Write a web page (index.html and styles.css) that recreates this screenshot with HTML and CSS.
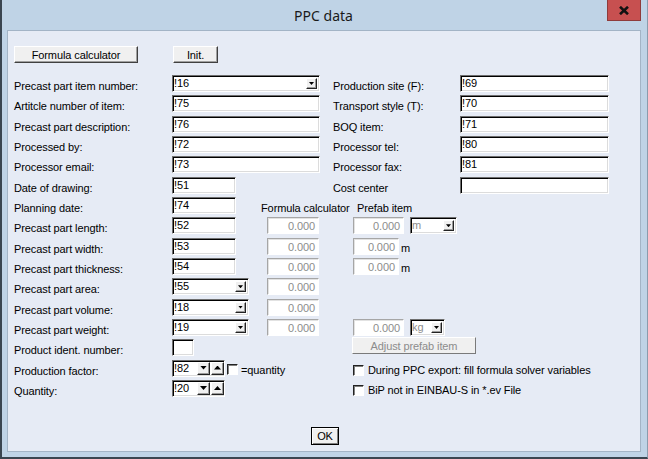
FILE: index.html
```html
<!DOCTYPE html>
<html lang="en">
<head>
  <meta charset="UTF-8">
  <title>PPC data</title>
  <link rel="stylesheet" href="styles.css">
</head>
<body>
  <div class="window">
    <div class="titlebar">
      <span></span>
      <span class="title">PPC data</span>
      <button class="close" title="Close">
        <svg width="10" height="9" viewBox="0 0 10 9"><path d="M1 0.8 L9 8.2 M9 0.8 L1 8.2" stroke="#111" stroke-width="2.6"/></svg>
      </button>
    </div>

    <div class="client">
      <div class="toolbar">
        <button class="btn btn-formula">Formula calculator</button>
        <button class="btn btn-init">Init.</button>
      </div>

      <div class="form">
        <div class="row">
          <span class="lbl">Precast part item number:</span>
          <div class="field combo w-wide c-main"><span class="val">!16</span><span class="drop"></span></div>
          <span class="lbl c-rlbl">Production site (F):</span>
          <div class="field w-right c-rin">!69</div>
        </div>
        <div class="row">
          <span class="lbl">Artitcle number of item:</span>
          <div class="field w-wide c-main">!75</div>
          <span class="lbl c-rlbl">Transport style (T):</span>
          <div class="field w-right c-rin">!70</div>
        </div>
        <div class="row">
          <span class="lbl">Precast part description:</span>
          <div class="field w-wide c-main">!76</div>
          <span class="lbl c-rlbl">BOQ item:</span>
          <div class="field w-right c-rin">!71</div>
        </div>
        <div class="row">
          <span class="lbl">Processed by:</span>
          <div class="field w-wide c-main">!72</div>
          <span class="lbl c-rlbl">Processor tel:</span>
          <div class="field w-right c-rin">!80</div>
        </div>
        <div class="row">
          <span class="lbl">Processor email:</span>
          <div class="field w-wide c-main">!73</div>
          <span class="lbl c-rlbl">Processor fax:</span>
          <div class="field w-right c-rin">!81</div>
        </div>
        <div class="row">
          <span class="lbl">Date of drawing:</span>
          <div class="field w-short c-main">!51</div>
          <span class="lbl c-rlbl">Cost center</span>
          <div class="field w-right c-rin"></div>
        </div>
        <div class="row">
          <span class="lbl">Planning date:</span>
          <div class="field w-short c-short">!74</div>
          <span class="lbl c-calc head-calc">Formula calculator</span>
          <span class="lbl c-prefab head-prefab">Prefab item</span>
        </div>
        <div class="row">
          <span class="lbl">Precast part length:</span>
          <div class="field w-short c-short">!52</div>
          <div class="field off w-calc c-calc">0.000</div>
          <div class="field off w-prefab c-prefab">0.000</div>
          <div class="field combo off w-unit c-unit"><span class="val">m</span><span class="drop"></span></div>
        </div>
        <div class="row">
          <span class="lbl">Precast part width:</span>
          <div class="field w-short c-short">!53</div>
          <div class="field off w-calc c-calc">0.000</div>
          <div class="c-prefab unit-cell"><div class="field off w-prefab">0.000</div><span class="unit">m</span></div>
        </div>
        <div class="row">
          <span class="lbl">Precast part thickness:</span>
          <div class="field w-short c-short">!54</div>
          <div class="field off w-calc c-calc">0.000</div>
          <div class="c-prefab unit-cell"><div class="field off w-prefab">0.000</div><span class="unit">m</span></div>
        </div>
        <div class="row">
          <span class="lbl">Precast part area:</span>
          <div class="field combo w-combo c-short"><span class="val">!55</span><span class="drop"></span></div>
          <div class="field off w-calc c-calc">0.000</div>
        </div>
        <div class="row">
          <span class="lbl">Precast part volume:</span>
          <div class="field combo w-combo c-short"><span class="val">!18</span><span class="drop"></span></div>
          <div class="field off w-calc c-calc">0.000</div>
        </div>
        <div class="row">
          <span class="lbl">Precast part weight:</span>
          <div class="field combo w-combo c-short"><span class="val">!19</span><span class="drop"></span></div>
          <div class="field off w-calc c-calc">0.000</div>
          <div class="field off w-prefab c-prefab">0.000</div>
          <div class="field combo off w-kg c-unit"><span class="val">kg</span><span class="drop"></span></div>
        </div>
        <div class="row">
          <span class="lbl">Product ident. number:</span>
          <div class="field w-tiny c-short"></div>
          <button class="btn btn-adjust c-opt" disabled>Adjust prefab item</button>
        </div>
        <div class="row">
          <span class="lbl">Production factor:</span>
          <div class="c-main spin-cell">
            <div class="field spin"><span class="val">!82</span><span class="arrow dn"></span><span class="arrow up"></span></div>
            <span class="check"></span><span>=quantity</span>
          </div>
          <div class="c-opt check-cell"><span class="check"></span><span>During PPC export: fill formula solver variables</span></div>
        </div>
        <div class="row">
          <span class="lbl">Quantity:</span>
          <div class="c-main spin-cell">
            <div class="field spin"><span class="val">!20</span><span class="arrow dn"></span><span class="arrow up"></span></div>
          </div>
          <div class="c-opt check-cell"><span class="check"></span><span>BiP not in EINBAU-S in *.ev File</span></div>
        </div>
      </div>

      <div class="actions">
        <button class="btn btn-ok">OK</button>
      </div>
    </div>
  </div>
</body>
</html>
```

FILE: styles.css
```css
:root {
  --frame: #bfd3e6;
  --client: #e6ebf5;
  --face: #f0f0f0;
  --dark: #6e6e6e;
  --text: #000;
  --muted: #8c8c8c;
}

body {
  margin: 0;
  font-family: "Liberation Sans", Arial, sans-serif;
  font-size: 11px;
  letter-spacing: -0.1px;
  color: var(--text);
}

.window {
  width: 648px;
  height: 459px;
  box-sizing: border-box;
  background: var(--frame);
  border-left: 2px solid #3a4550;
  border-right: 1px solid #8a9cad;
  border-bottom: 2px solid #3a4550;
  padding: 0 6px 5px 5px;
  display: flex;
  flex-direction: column;
}

/* title bar */
.titlebar {
  height: 30px;
  margin: 0 -6px 0 -7px;
  display: grid;
  grid-template-columns: 1fr auto 1fr;
  align-items: start;
}

.title {
  font-family: "Noto Sans", sans-serif;
  font-size: 14px;
  letter-spacing: 0;
  color: #1a1a1a;
  margin-top: 6px;
}

.close {
  justify-self: end;
  margin-right: 6px;
  width: 34px;
  height: 21px;
  padding: 0;
  background: #c75050;
  border: 1px solid #8f3b3b;
  border-top: none;
  display: flex;
  align-items: center;
  justify-content: center;
}

/* client area */
.client {
  flex: 1;
  background: var(--client);
  border: 1px solid #a3b4c6;
  padding: 15px 0 0 6px;
  display: flex;
  flex-direction: column;
}

.toolbar {
  display: flex;
  gap: 35px;
}

.btn {
  font-family: inherit;
  font-size: 11px;
  letter-spacing: -0.1px;
  color: var(--text);
  background: var(--face);
  border: 1px solid;
  border-color: #fff #404040 #404040 #fff;
  box-shadow: inset -1px -1px 0 #a0a0a0;
  padding: 0;
  height: 17px;
  line-height: 14px;
}

.btn-formula { width: 124px; }
.btn-init { width: 45px; }

.btn-adjust {
  width: 124px;
  margin-left: -1px;
  color: var(--muted);
  border-color: #fff #7a7a7a #7a7a7a #fff;
  box-shadow: none;
}

.actions {
  display: flex;
  justify-content: center;
  margin-top: 29px;
  padding-right: 4px;
}

.btn-ok {
  width: 28px;
  height: 18px;
  border: 1px solid #000;
  box-shadow: inset 1px 1px 0 #fff, inset -1px -1px 0 #808080;
}

/* form grid */
.form {
  margin-top: 10px;
}

.row {
  display: grid;
  grid-template-columns: 158px 95px 66px 20px 57px 50px 149px;
  height: 20.33px;
  align-items: start;
}

.lbl {
  grid-column: 1;
  margin-top: 7px;
  line-height: 13px;
  white-space: nowrap;
}

.c-main { grid-column: 2 / 4; }
.c-short { grid-column: 2; }
.c-calc { grid-column: 3; }
.c-rlbl { grid-column: 4 / 7; }
.c-rin { grid-column: 7; }
.c-prefab { grid-column: 5; }
.c-unit { grid-column: 6; }
.c-opt { grid-column: 5 / 8; }

.head-calc { margin-left: -6px; }
.head-prefab { margin-left: 4px; }

.field {
  margin-top: 2px;
  height: 17px;
  box-sizing: border-box;
  background: #fff;
  border: 1px solid;
  border-color: var(--dark) #fff #fff var(--dark);
  box-shadow: inset 1px 1px 0 #000, inset -1px -1px 0 #dcdcdc;
  padding: 1px 0 0 1px;
  line-height: 12px;
  display: flex;
  align-items: flex-start;
  overflow: hidden;
}

.field.off {
  border-color: #a6a6a6 #fff #fff #a6a6a6;
  box-shadow: inset 1px 1px 0 #e2e2e2;
  color: var(--muted);
  justify-content: flex-end;
  padding: 2px 3px 0 0;
}

.w-wide { width: 148px; }
.w-short { width: 64px; }
.w-combo { width: 77px; }
.w-tiny { width: 22px; }
.w-calc { width: 52px; }
.w-prefab { width: 51px; }
.w-unit { width: 47px; }
.w-kg { width: 35px; }
.w-right { width: 149px; }

/* combo boxes */
.combo .val { flex: 1; }

.field.combo.off {
  justify-content: flex-start;
  border-color: var(--dark) #fff #fff var(--dark);
  box-shadow: inset 1px 1px 0 #000, inset -1px -1px 0 #dcdcdc;
  padding: 1px 0 0 1px;
}

.drop {
  width: 11px;
  height: 11px;
  margin: 1px 2px 0 0;
  box-sizing: border-box;
  background: var(--face);
  border: 1px solid;
  border-color: #fff #222 #222 #fff;
  box-shadow: inset -1px -1px 0 #9a9a9a;
  position: relative;
}

.drop::after {
  content: "";
  position: absolute;
  left: 2px;
  top: 3px;
  width: 5px;
  height: 3px;
  background: #000;
  clip-path: polygon(0 0, 100% 0, 50% 100%);
}

.unit-cell {
  display: flex;
  align-items: flex-start;
  gap: 2px;
}

.unit {
  margin-top: 6px;
  line-height: 13px;
}

/* spin boxes */
.spin-cell {
  display: flex;
  align-items: flex-start;
}

.spin {
  width: 53px;
  gap: 1px;
}

.spin .val { flex: 1; }

.arrow {
  width: 13px;
  height: 13px;
  box-sizing: border-box;
  background: var(--face);
  border: 1px solid;
  border-color: #fff #222 #222 #fff;
  box-shadow: inset -1px -1px 0 #9a9a9a;
  position: relative;
}

.arrow::after {
  content: "";
  position: absolute;
  left: 2px;
  top: 3px;
  width: 7px;
  height: 4px;
  background: #000;
}

.arrow.dn::after { clip-path: polygon(0 0, 100% 0, 50% 100%); }
.arrow.up::after { clip-path: polygon(50% 0, 100% 100%, 0 100%); }

.check {
  width: 11px;
  height: 11px;
  box-sizing: border-box;
  background: #fff;
  border: 1px solid;
  border-color: #222 #fff #fff #222;
  box-shadow: inset 1px 1px 0 #808080;
  flex: none;
}

.spin-cell .check {
  margin: 6px 3px 0 2px;
}

.spin-cell > span:last-child {
  margin-top: 6px;
  line-height: 13px;
}

.check-cell {
  display: flex;
  align-items: flex-start;
  gap: 4px;
  white-space: nowrap;
}

.check-cell .check { margin-top: 7px; }

.check-cell span:last-child {
  margin-top: 6px;
  line-height: 13px;
}
```
